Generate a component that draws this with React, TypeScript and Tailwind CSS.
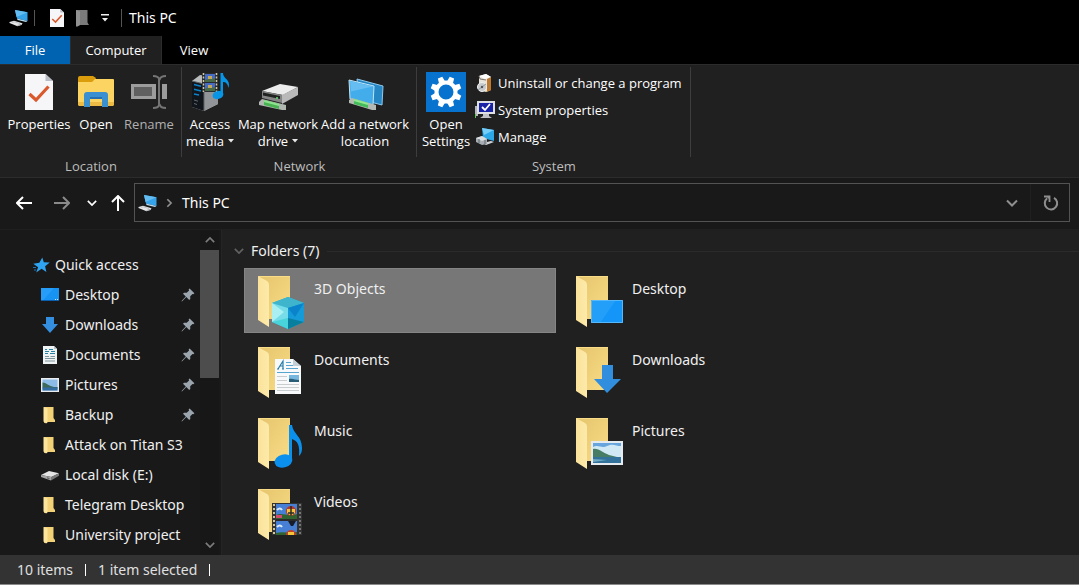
import React from "react";
import { clsx } from "clsx";

type IconProps = { className?: string };

/* ---------- small icons ---------- */

const PcIcon = ({ className }: IconProps) => (
  <svg className={clsx("shrink-0", className)} viewBox="0 0 20 18" fill="none">
    <path d="M6 1 18.500 3.200V12L8 9.600Z" fill="#35a3ea" />
    <path d="M6 1 18.500 3.200 7.500 8Z" fill="#63bdf3" />
    <path d="m8 9.600 10.500 2.400-1.500 1-8.500-2Z" fill="#b8dcf0" />
    <path d="m.5 13 4.500-1.300 8.500 2.600-1 1.700-4 1.200-8-3.200Z" fill="#e4e6e8" />
    <path d="m3 13.500 2.500-.6 5.500 1.700" stroke="#b4b8ba" strokeWidth=".7" />
    <path d="m8.500 16.500 4-1.300" stroke="#95999c" strokeWidth=".8" />
  </svg>
);

const CheckPageIcon = ({ className }: IconProps) => (
  <svg className={clsx("shrink-0", className)} viewBox="0 0 28 36" fill="none">
    <path d="M0 0h20.500L28 7v29H0Z" fill="#f6f6f8" />
    <path d="M20.500 0 28 7h-7.500Z" fill="#b9bcc4" />
    <path d="m4.500 20 6.500 6L23.500 12.500" stroke="#d9592c" strokeWidth="3.200" />
  </svg>
);

const NewFolderIcon = ({ className }: IconProps) => (
  <svg className={clsx("shrink-0", className)} viewBox="0 0 13 17" fill="none">
    <path d="M0 0h11.500v12.500L13 15H4l-4 1.500Z" fill="#7b7b7b" />
    <path d="m0 0 4 1.500V15l-3 1.800L0 16Z" fill="#929292" />
  </svg>
);

const StarIcon = ({ className }: IconProps) => (
  <svg className={clsx("shrink-0", className)} viewBox="0 0 17 16" fill="none">
    <path
      d="m9.300.5 1.500 4.700 6 .3-4.700 3.700 1.300 5.800-4.800-3.200L3.200 15.500l1.900-5.300L.3 6.700l6-.9Z"
      fill="#2fa4f2"
    />
    <path d="M0 10.500h3M1 13h2" stroke="#1c73b5" />
  </svg>
);

const DesktopIcon = ({ className }: IconProps) => (
  <svg className={clsx("shrink-0", className)} viewBox="0 0 18 14" fill="none">
    <path d="M0 0h18v13H0Z" fill="#1793f4" />
    <path d="M0 0h13L1.500 13H0Z" fill="#279dfa" />
    <path d="M0 12.500h18" stroke="#0b5fae" />
    <path d="M14 11.500h1m1 0h1" stroke="#c8e7ff" />
  </svg>
);

const DownloadIcon = ({ className }: IconProps) => (
  <svg className={clsx("shrink-0", className)} viewBox="0 0 18 18" fill="none">
    <path d="M5 1h8v7h4l-8 9-8-9h4Z" fill="#358fe0" />
  </svg>
);

const DocumentIcon = ({ className }: IconProps) => (
  <svg className={clsx("shrink-0", className)} viewBox="0 0 18 18" fill="none">
    <path d="M2 0h11l3 3v15H2Z" fill="#f0f3f4" />
    <path d="M13 0v3h3" fill="#b6c0c5" />
    <path d="M4 3.500h2m2 0h4M4 5.500h4m2 0h4M4 7.500h3m2 0h5" stroke="#2681a5" />
    <path d="M4 10.500h4m1.500 0H14M4 12.500h10M4 15h10" stroke="#7e969f" />
  </svg>
);

const PictureIcon = ({ className }: IconProps) => (
  <svg className={clsx("shrink-0", className)} viewBox="0 0 18 14" fill="none">
    <path d="M0 0h18v14H0Z" fill="#e9edf0" />
    <path d="M1.500 1.500h15v11h-15Z" fill="#8bbbe6" />
    <path d="M1.500 4.500C5 4.500 8 8 13 9h3.500v1.500h-15Z" fill="#3b695b" />
    <path d="M1.500 9.500h15v3h-15Z" fill="#346da3" />
  </svg>
);

const SmallFolderIcon = ({ className }: IconProps) => (
  <svg className={clsx("shrink-0", className)} viewBox="0 0 18 18" fill="none">
    <path d="M3 1h9.500v11l1.500 2v2H6L3 17Z" fill="#f3d277" />
    <path d="m2.500 1 4 1.200V16.500l-1.500 1-2.500-2Z" fill="#fbe49c" />
  </svg>
);

const DriveIcon = ({ className }: IconProps) => (
  <svg className={clsx("shrink-0", className)} viewBox="0 0 18 12" fill="none">
    <path d="m0 6 8-4 10 2.300L10.500 8Z" fill="#e4e4e4" />
    <path d="M0 6v2l10 3.500V8Z" fill="#a5a5a5" />
    <path d="m10 8 8-3.700v2.500l-8 4.700Z" fill="#777" />
    <path d="m6 8.800 2.500.8" stroke="#555" />
  </svg>
);

const PinIcon = ({ className }: IconProps) => (
  <svg className={clsx("shrink-0", className)} viewBox="0 0 14 14" fill="none">
    <path
      d="M8.600.6 13.400 5.300 12.300 6.300 11.500 5.900 9.200 8.300 9.300 11 8.200 12 5.300 9.100 1.200 13.200.5 13.500.8 12.700 4.800 8.600 2 5.700 3 4.700 5.700 4.800 8.100 2.500 7.600 1.600Z"
      fill="#9ba5ae"
    />
  </svg>
);

const Chevron = ({ className, d }: IconProps & { d: string }) => (
  <svg className={clsx("shrink-0", className)} viewBox="0 0 12 12" fill="none">
    <path d={d} stroke="currentColor" strokeWidth="2" />
  </svg>
);

const DOWN = "m1 3.500 5 5 5-5";
const UP = "m1 8.500 5-5 5 5";
const RIGHT = "m4 1.500 4.500 4.500L4 10.500";

const Arrow = ({ className }: IconProps) => (
  <svg className={clsx("shrink-0", className)} viewBox="0 0 16 14" fill="none">
    <path d="M1 7h15M7 1 1 7l6 6" stroke="currentColor" strokeWidth="2" />
  </svg>
);

const RefreshIcon = ({ className }: IconProps) => (
  <svg className={clsx("shrink-0", className)} viewBox="0 0 16 16" fill="none">
    <path d="M11 2.800A6.200 6.200 0 1 1 4.200 3.300" stroke="currentColor" strokeWidth="2" />
    <path d="M1 1.500h5.500V7" stroke="currentColor" strokeWidth="1.800" />
    <path d="M3.500 1.500h3v3Z" fill="currentColor" />
  </svg>
);

/* ---------- ribbon icons ---------- */

const OpenIcon = () => (
  <svg className="h-10 w-10" viewBox="0 0 40 40" fill="none">
    <path d="M2 6q0-2 2-2h13l3 2-2 4H2Z" fill="#dc9d0d" />
    <path d="M2 10h14l3-3h18q1 0 1 1v24q0 2-2 2H4q-2 0-2-2Z" fill="#fcd462" />
    <path d="M2 30h36v2q0 2-2 2H4q-2 0-2-2Z" fill="#edbb44" />
    <path d="M8 35V23q0-3 3-3h18q3 0 3 3v12h-6v-8H14v8Z" fill="#398fd0" />
    <path d="M14 25h12v2H14Z" fill="#256fae" />
  </svg>
);

const RenameIcon = () => (
  <svg className="h-10 w-10" viewBox="0 0 40 40" fill="none">
    <path d="M2 12h36v15H2Z" fill="#9c9c9c" />
    <path d="M5 15h18v9H5Z" fill="#606060" />
    <path d="M27 10h6v19h-6Z" fill="#202020" />
    <path d="M24 4c4 0 6 1 6.500 4C31 5 33 4 37 4M30 7v26M24 36c4 0 6-1 6.500-4 .5 3 2.500 4 6.500 4" stroke="#747474" strokeWidth="2" />
  </svg>
);

const AccessMediaIcon = () => (
  <svg className="h-10 w-10" viewBox="0 0 40 40" fill="none">
    <path d="m2 9 8-6 18 3v26l-14 7-12-4Z" fill="#b9bcbd" />
    <path d="m2 9 12 3v27L2 35Z" fill="#10161c" />
    <path d="m14 12 14-5v25l-14 7Z" fill="#929597" />
    <path d="m2 9 12 3v27" stroke="#5f6568" strokeWidth="1" />
    <path d="m4 12.500 7 1.700m-7 3 7 1.700m-7 3 5 1.200" stroke="#0b82cb" strokeWidth="1.500" />
    <path d="m4 28 4 1.200m-4 2.300 3 1" stroke="#626970" />
    <path d="M12 1h16v19H12Z" fill="#292c2e" />
    <path d="M15 2h10v8H15Zm0 9h10v8H15Z" fill="#456bc5" />
    <path d="M15 8c3-2 6 0 10-2v4H15Zm0 9c4-3 6 0 10-2v4H15Z" fill="#496a49" />
    <path d="M18 4h4v3h-4Zm0 9h4v3h-4Z" fill="#c6a957" />
    <path d="M13.500 1v19m13-19v19" stroke="#d2c8a3" strokeWidth="1.500" strokeDasharray="2 1.500" />
    <ellipse cx="28" cy="23" rx="5.500" ry="4" transform="rotate(-15 28 23)" fill="#0895e6" />
    <path d="M30.500 23V1H33c0 6 8 6 5.500 15-1-5-3-6-5.500-6v13Z" fill="#0895e6" />
  </svg>
);

const MapDriveIcon = () => (
  <svg className="h-10 w-10" viewBox="0 0 40 40" fill="none">
    <path d="m4 19 18-7 18 3-15 8Z" fill="#ececec" />
    <path d="m4 19 20 4v8L4 26Z" fill="#858585" />
    <path d="m24 23 16-8v8l-16 9Z" fill="#b9b9b9" />
    <path d="m5 20.500 17 3.500v3L5 23.500Z" fill="#202220" />
    <path d="M18 26h2" stroke="#62e273" strokeWidth="1.500" />
    <path d="m1 30 3-3 24 6v5h-4L1 33Z" fill="#b1b8b1" />
    <path d="m6 28 15 4v5L6 33Z" fill="#48b350" />
    <path d="m6 29 15 4" stroke="#8de28e" strokeWidth="2" />
  </svg>
);

const NetworkLocationIcon = () => (
  <svg className="h-10 w-10" viewBox="0 0 40 40" fill="none">
    <path d="m12 7 26 7-1 19-23-6Z" fill="#2588c5" stroke="#8fc9ee" />
    <path d="m4 8 25 6-1 19-23-6Z" fill="#42adea" stroke="#c0e4f5" />
    <path d="m5 9 23 5.500-22 5Z" fill="#65bdf1" />
    <path d="m4 28 3-2 24 7v5h-4L4 31Z" fill="#b4bbb4" />
    <path d="m9 27 14 4v5L9 32Z" fill="#43bc59" />
    <path d="m9 28 14 4" stroke="#92e891" strokeWidth="2" />
  </svg>
);

const GEAR_TEETH = [22.5, 67.5, 112.5, 157.5, 202.5, 247.5, 292.5, 337.5];

const SettingsIcon = () => (
  <svg className="h-10 w-10" viewBox="0 0 40 40" fill="none">
    <path d="M0 0h40v40H0Z" fill="#0873cf" />
    {GEAR_TEETH.map((angle) => (
      <path key={angle} d="m16.800 10 .8-5.500h4.800l.8 5.500Z" fill="#fff" transform={`rotate(${angle} 20 20)`} />
    ))}
    <circle cx="20" cy="20" r="9.500" stroke="#fff" strokeWidth="4" />
  </svg>
);

const UninstallIcon = () => (
  <svg className="h-5 w-5 shrink-0" viewBox="0 0 20 20" fill="none">
    <path d="m4 3 7-2 5 3v13l-5 2-7-2Z" fill="#e9e4da" />
    <path d="m4 3 7-2 5 3-6 2Z" fill="#fff" />
    <path d="m12 6 4-2v13l-4 2Z" fill="#bd7a2f" />
    <path d="m4 3 1 3 6 1" stroke="#77736e" />
    <circle cx="7" cy="14" r="4.500" fill="#c8cbcd" stroke="#f0f0f0" />
    <path d="m7 14 4-3M7 14l-4 3" stroke="#8c9ca4" />
    <circle cx="7" cy="14" r="1.200" fill="#555" />
  </svg>
);

const SystemPropertiesIcon = () => (
  <svg className="h-5 w-5 shrink-0" viewBox="0 0 20 20" fill="none">
    <path d="M0 6h3v10H0Z" fill="#b3b7b9" />
    <path d="M2 1h18v13H2Z" fill="#dedfe5" />
    <path d="M4 3h14v9H4Z" fill="#1824a5" />
    <path d="m7 7 3 3 5-6" stroke="#fff" strokeWidth="1.800" />
    <path d="M8 14h6v2l3 2H5l3-2Z" fill="#bfc2c6" />
    <path d="M.5 14v4" stroke="#55ca4c" />
  </svg>
);

const ManageIcon = () => (
  <svg className="h-5 w-5 shrink-0" viewBox="0 0 20 20" fill="none">
    <path d="m7 1 12 2v11L8 11Z" fill="#2ca7e8" />
    <path d="m7 1 12 2L9 8Z" fill="#74cef7" />
    <path d="m8 16 8-2 3 1-8 3Z" fill="#d2d6d8" />
    <path d="m1 11 6-2 5 3v5l-5 1-6-3Z" fill="#a7adb2" />
    <path d="m1 11 6-2 5 3-5 2Z" fill="#d8dde0" />
    <path d="M4 12v4m6-3v4" stroke="#60686d" />
  </svg>
);

/* ---------- folder tiles ---------- */

const Cube = () => (
  <>
    <path d="m30 21 16 6v19l-16 7-16-7V27Z" fill="#20b2d1" />
    <path d="m30 21 16 6-16 5-16-5Z" fill="#3fb5cd" />
    <path d="m14 27 16 5v15l-16-1Z" fill="#75dce8" />
    <path d="m14 27 12 9-12 10Z" fill="#aaf0f2" />
    <path d="m30 32 16-5v19H30Z" fill="#159bd8" />
    <path d="m30 32 16-5-9 14Z" fill="#0b83cb" />
    <path d="m30 42 16 4-16 7Z" fill="#087f9f" />
    <path d="m30 42-16 4 16 7Z" fill="#49d3db" />
  </>
);

const DesktopOverlay = () => (
  <>
    <path d="M15 24h32v23H15Z" fill="#1496f8" />
    <path d="M15 24h25L24 47h-9Z" fill="#239ffa" />
    <path d="M15.500 24.500h31v22h-31Z" stroke="#57b7fb" />
  </>
);

const DocumentOverlay = () => (
  <>
    <path d="M17 12h18l8 7v28H17Z" fill="#f7f9fa" />
    <path d="M35 12v7h8Z" fill="#c3d0d7" />
    <path d="m20 22 5-8v8m-3-3h3m-6 3h2m3 0h2" stroke="#287caa" strokeWidth="1.200" />
    <path d="M28 15.500h5m-5 3h7m-7 3h12M19 25.500h22" stroke="#58a6cf" />
    <path d="M31 28h10v7H31Z" fill="#75b7df" />
    <path d="M31 32c4-1 6 1 10 1v2H31Z" fill="#275d78" />
    <path d="M19 29.500h10m-10 4h10m-10 4h22m-22 3h22m-22 3h22" stroke="#c9cdd0" />
  </>
);

const DownloadOverlay = () => <path d="M26 18h11v14h8L31 46 18 32h8Z" fill="#318ddd" />;

const MusicOverlay = () => (
  <>
    <ellipse cx="25.500" cy="43" rx="9" ry="6.500" transform="rotate(-14 25.500 43)" fill="#0b91ed" />
    <path d="M31 7h3c1 9 10 11 10 23 0 4-1 6-3 8 1-10-1-15-7-17v22h-3Z" fill="#0b91ed" />
  </>
);

const PictureOverlay = () => (
  <>
    <path d="M15 23h32v24H15Z" fill="#e5ebef" />
    <path d="M17 25h28v20H17Z" fill="#67a5dc" />
    <path d="M17 29c6-3 8 2 14-1s9 0 14 0v12H17Z" fill="#d1e9f5" />
    <path d="M17 31c6-1 10 4 16 6l8 2H17Z" fill="#477d65" />
    <path d="M17 39h28v6H17Z" fill="#33739b" />
    <path d="m17 41 14 1-14 2Z" fill="#72abc4" />
  </>
);

const VideoOverlay = () => (
  <>
    <path d="M14 14h30v32H14Z" fill="#343434" />
    <path d="M18 15h21v15H18Zm0 17h21v14H18Z" fill="#477fd4" />
    <path d="M18 26c6-3 11 2 21-1v5H18Zm0 18c8-2 13 1 21-1v3H18Z" fill="#30632f" />
    <path d="M19 21q3-3 5 0m-5 17q3-3 5 0" stroke="#ddebf7" strokeWidth="2" />
    <circle cx="33" cy="22" r="5" fill="#b9372b" />
    <path d="M29 20h8v4l-4 3-4-3Z" fill="#f2c53b" />
    <path d="M33 17v10m-3-3h6" stroke="#292a28" strokeWidth="1.500" />
    <path d="M28 46a5 5 0 0 1 10 0Z" fill="#c54028" />
    <path d="M30 43h6v3h-6Z" fill="#f2c53b" />
    <path d="M30 32h8l-3 5h-2Z" fill="#171c28" />
    <path d="M18 26h6v3h-6" fill="#d44970" />
    <path d="M16 15v31" stroke="#d5c796" strokeWidth="2" strokeDasharray="2 2" />
    <path d="M42 15v31" stroke="#777" strokeWidth="2" strokeDasharray="2 2" />
    <path d="M18 31h21" stroke="#202020" />
  </>
);

const FolderIcon = ({ children }: { children: React.ReactNode }) => (
  <svg className="h-[54px] w-12 shrink-0" viewBox="0 0 48 54" fill="none">
    <defs>
      <linearGradient id="folder-back" x1="0" y1="0" x2="1" y2="1">
        <stop stopColor="#e5c56d" />
        <stop offset="1" stopColor="#f8dc86" />
      </linearGradient>
      <linearGradient id="folder-flap" x1="0" y1="0" x2="1" y2="0">
        <stop stopColor="#fae29a" />
        <stop offset="1" stopColor="#fdeaaa" />
      </linearGradient>
    </defs>
    <path d="M0 0h32v43H0Z" fill="url(#folder-back)" />
    <path d="m0 0 9 5q2 1 2 4v42L0 44Z" fill="url(#folder-flap)" />
    <path d="M0 .5h32" stroke="#f8dc87" />
    {children}
  </svg>
);

/* ---------- data ---------- */

const quickAccess = [
  { name: "Desktop", icon: DesktopIcon, size: "h-3.5", pinned: true },
  { name: "Downloads", icon: DownloadIcon, size: "h-[18px]", pinned: true },
  { name: "Documents", icon: DocumentIcon, size: "h-[18px]", pinned: true },
  { name: "Pictures", icon: PictureIcon, size: "h-3.5", pinned: true },
  { name: "Backup", icon: SmallFolderIcon, size: "h-[18px]", pinned: true },
  { name: "Attack on Titan S3", icon: SmallFolderIcon, size: "h-[18px]", pinned: false },
  { name: "Local disk (E:)", icon: DriveIcon, size: "h-3", pinned: false },
  { name: "Telegram Desktop", icon: SmallFolderIcon, size: "h-[18px]", pinned: false },
  { name: "University project", icon: SmallFolderIcon, size: "h-[18px]", pinned: false },
];

const folders = [
  { name: "3D Objects", overlay: <Cube />, selected: true },
  { name: "Desktop", overlay: <DesktopOverlay /> },
  { name: "Documents", overlay: <DocumentOverlay /> },
  { name: "Downloads", overlay: <DownloadOverlay /> },
  { name: "Music", overlay: <MusicOverlay /> },
  { name: "Pictures", overlay: <PictureOverlay /> },
  { name: "Videos", overlay: <VideoOverlay /> },
];

/* ---------- sections ---------- */

const Caret = () => (
  <svg className="mb-1 ml-1 inline h-1 w-1.5" viewBox="0 0 6 4">
    <path d="M0 0h6L3 3.500Z" fill="#e8e8e8" />
  </svg>
);

function RibbonButton({
  icon,
  className,
  disabled,
  children,
}: {
  icon: React.ReactNode;
  className: string;
  disabled?: boolean;
  children: React.ReactNode;
}) {
  return (
    <button
      disabled={disabled}
      className={clsx("flex flex-col items-center whitespace-nowrap", disabled ? "text-[#b0b0b0]" : "text-white", className)}
    >
      <span className="mb-1 flex h-10 items-center">{icon}</span>
      <span className="leading-[17px]">{children}</span>
    </button>
  );
}

function RibbonGroup({ label, children }: { label: string; children: React.ReactNode }) {
  return (
    <section className="flex flex-col">
      <div className="flex h-[90px] items-start border-r border-[#3d3d3d] pt-[5px]">{children}</div>
      <h2 className="text-center leading-[18px] text-[#bdbdbd]">{label}</h2>
    </section>
  );
}

function Ribbon() {
  return (
    <div className="flex h-[114px] border-y border-[#2c2c2c] bg-[#202020] pt-[2px] font-['Open_Sans',sans-serif] text-[13px] text-white">
      <RibbonGroup label="Location">
        <div className="flex pr-1 pl-[7px]">
          <RibbonButton className="w-16" icon={<CheckPageIcon className="h-9 w-7" />}>
            Properties
          </RibbonButton>
          <RibbonButton className="w-[50px]" icon={<OpenIcon />}>
            Open
          </RibbonButton>
          <RibbonButton className="w-14" icon={<RenameIcon />} disabled>
            Rename
          </RibbonButton>
        </div>
      </RibbonGroup>
      <RibbonGroup label="Network">
        <div className="flex pr-1">
          <RibbonButton className="w-14" icon={<AccessMediaIcon />}>
            Access
            <br />
            media
            <Caret />
          </RibbonButton>
          <RibbonButton className="w-20" icon={<MapDriveIcon />}>
            Map network
            <br />
            drive
            <Caret />
          </RibbonButton>
          <RibbonButton className="w-[94px]" icon={<NetworkLocationIcon />}>
            Add a network
            <br />
            location
          </RibbonButton>
        </div>
      </RibbonGroup>
      <RibbonGroup label="System">
        <RibbonButton className="w-[58px]" icon={<SettingsIcon />}>
          Open
          <br />
          Settings
        </RibbonButton>
        <div className="-mt-[3px] flex flex-col pr-2">
          <button className="flex h-[27px] items-center gap-[3px] whitespace-nowrap">
            <UninstallIcon />
            Uninstall or change a program
          </button>
          <button className="flex h-[27px] items-center gap-[3px] whitespace-nowrap">
            <SystemPropertiesIcon />
            System properties
          </button>
          <button className="flex h-[27px] items-center gap-[3px] whitespace-nowrap">
            <ManageIcon />
            Manage
          </button>
        </div>
      </RibbonGroup>
    </div>
  );
}

function AddressBar() {
  return (
    <div className="flex items-center border-b border-[#1f1f1f] bg-[#191919] pt-[5px] pr-[9px] pb-[7px] pl-4 text-white">
      <button aria-label="Back">
        <Arrow className="h-3.5 w-4" />
      </button>
      <button aria-label="Forward" className="ml-[22px] text-[#8a8a8a]" disabled>
        <Arrow className="h-3.5 w-4 rotate-180" />
      </button>
      <button aria-label="Recent locations" className="ml-[17px]">
        <Chevron className="h-2.5 w-2.5" d={DOWN} />
      </button>
      <button aria-label="Up" className="ml-[13px]">
        <Arrow className="h-3.5 w-4 rotate-90" />
      </button>
      <div className="ml-2 flex h-[39px] flex-1 items-center border border-[#535353] pl-[3px]">
        <PcIcon className="h-[18px] w-5" />
        <Chevron className="ml-1.5 h-2.5 w-2.5 text-[#8f8f8f]" d={RIGHT} />
        <button className="ml-2 text-[14px]">This PC</button>
        <button aria-label="Previous locations" className="ml-auto text-[#8f8f8f]">
          <Chevron className="h-3 w-3" d={DOWN} />
        </button>
        <span className="ml-3 h-[37px] w-px bg-[#202020]" />
        <button aria-label="Refresh" className="mr-2.5 ml-3 text-[#8f8f8f]">
          <RefreshIcon className="h-4 w-4" />
        </button>
      </div>
    </div>
  );
}

function Sidebar() {
  return (
    <aside className="flex w-[222px] shrink-0 border-r border-[#252525] bg-[#191919]">
      <nav className="flex-1 pt-5">
        <a href="#quick-access" className="flex h-[30px] items-center gap-[5px] pl-[33px]">
          <StarIcon className="h-4 w-[17px]" />
          Quick access
        </a>
        {quickAccess.map((item) => (
          <a key={item.name} href="#folder" className="flex h-[30px] items-center pr-[5px] pl-[41px] whitespace-nowrap">
            <item.icon className={clsx("w-[18px]", item.size)} />
            <span className="ml-1.5">{item.name}</span>
            {item.pinned && <PinIcon className="ml-auto h-3.5 w-3.5" />}
          </a>
        ))}
      </nav>
      <div className="mr-0.5 flex w-[19px] flex-col items-center bg-[#171717] text-[#7c7c7c]">
        <button aria-label="Scroll up" className="flex h-5 items-center">
          <Chevron className="h-2.5 w-2.5" d={UP} />
        </button>
        <div className="h-32 w-full bg-[#4d4d4d]" />
        <button aria-label="Scroll down" className="mt-auto flex h-5 items-center">
          <Chevron className="h-2.5 w-2.5" d={DOWN} />
        </button>
      </div>
    </aside>
  );
}

export default function App() {
  return (
    <div className="flex min-h-screen flex-col bg-[#202020] font-['Noto_Sans',sans-serif] text-[14px] leading-5 text-[#f0f0f0]">
      <header className="bg-black text-white">
        <div className="flex h-9 items-center pl-[9px]">
          <PcIcon className="h-[18px] w-5" />
          <span className="ml-[5px] h-4 w-px bg-[#555]" />
          <button aria-label="Properties" className="ml-[15px]">
            <CheckPageIcon className="h-[18px] w-3.5" />
          </button>
          <button aria-label="New folder" className="ml-3">
            <NewFolderIcon className="h-[17px] w-[13px]" />
          </button>
          <button aria-label="Customize Quick Access Toolbar" className="ml-3">
            <svg className="h-2 w-2" viewBox="0 0 8 8">
              <path d="M0 0h8v1.500H0ZM1 4h6L4 7.500Z" fill="#f0f0f0" />
            </svg>
          </button>
          <span className="ml-3 h-[18px] w-px bg-[#555]" />
          <h1 className="ml-[7px]">This PC</h1>
        </div>
        <div className="flex h-7 font-['Open_Sans',sans-serif] text-[13px]">
          <button className="w-[70px] bg-[#0063b1]">File</button>
          <button className="w-[92px] border-x border-[#2c2c2c] bg-[#202020]">Computer</button>
          <button className="w-16">View</button>
        </div>
      </header>
      <Ribbon />
      <AddressBar />
      <div className="flex flex-1">
        <Sidebar />
        <main className="flex-1 pt-[11px] pl-3">
          <h2 className="flex items-center">
            <Chevron className="h-2.5 w-2.5 text-[#626262]" d={DOWN} />
            <span className="ml-[7px]">Folders (7)</span>
            <span className="ml-2 h-px flex-1 bg-[#2b2b2b]" />
          </h2>
          <div className="mt-[7px] ml-2.5 flex max-w-[640px] flex-wrap gap-x-1.5 gap-y-[6px]">
            {folders.map((folder) => (
              <button
                key={folder.name}
                className={clsx(
                  "flex h-[65px] w-[312px] items-start border pt-[7px] pl-[13px]",
                  folder.selected ? "border-[#858585] bg-[#777]" : "border-transparent",
                )}
              >
                <FolderIcon>{folder.overlay}</FolderIcon>
                <span className="mt-[3px] ml-2">{folder.name}</span>
              </button>
            ))}
          </div>
        </main>
      </div>
      <footer className="flex h-[30px] items-center border-b border-[#8a8a8a] bg-[#333] pl-[17px] text-[#e0e0e0]">
        <span>10 items</span>
        <span className="mx-3 h-3 w-px bg-white" />
        <span>1 item selected</span>
        <span className="mx-3 h-3 w-px bg-white" />
      </footer>
    </div>
  );
}
